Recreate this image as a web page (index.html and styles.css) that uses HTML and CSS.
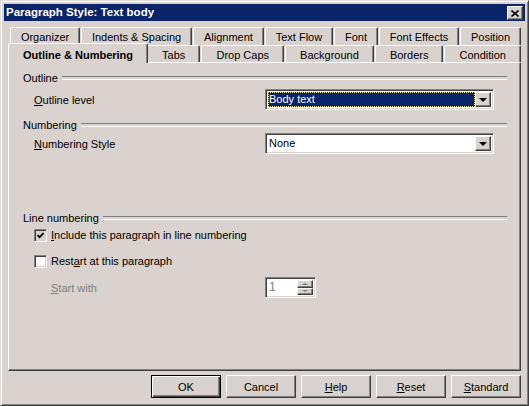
FILE: index.html
```html
<!DOCTYPE html>
<html lang="en">
  <head>
    <meta charset="UTF-8" />
    <title>Paragraph Style: Text body</title>
    <link rel="stylesheet" href="styles.css">
  </head>
  <body>
    <div class="window">
      <div class="titlebar">
        <span class="title">Paragraph Style: Text body</span>
        <button class="close" aria-label="Close">
          <svg width="8" height="7" viewBox="0 0 8 7">
            <path d="M0.5 0.5 L7.5 6.5 M7.5 0.5 L0.5 6.5" stroke="#000" stroke-width="1.6" />
          </svg>
        </button>
      </div>

      <!-- Two rows of tabs, the front row holds the open page -->
      <div class="tabs">
        <div class="tab-row">
          <div class="tab">Organizer</div>
          <div class="tab">Indents &amp; Spacing</div>
          <div class="tab">Alignment</div>
          <div class="tab">Text Flow</div>
          <div class="tab">Font</div>
          <div class="tab">Font Effects</div>
          <div class="tab">Position</div>
        </div>
        <div class="tab-row">
          <div class="tab active">Outline &amp; Numbering</div>
          <div class="tab">Tabs</div>
          <div class="tab">Drop Caps</div>
          <div class="tab">Background</div>
          <div class="tab">Borders</div>
          <div class="tab">Condition</div>
        </div>
      </div>

      <div class="panel">
        <div class="group-head head-outline">Outline</div>
        <div class="field-row row-outline">
          <span class="label"><u>O</u>utline level</span>
          <div class="select focused">
            <span class="value">Body text</span>
            <span class="drop"><i class="arrow"></i></span>
          </div>
        </div>

        <div class="group-head head-numbering">Numbering</div>
        <div class="field-row row-numbering">
          <span class="label"><u>N</u>umbering Style</span>
          <div class="select">
            <span class="value">None</span>
            <span class="drop"><i class="arrow"></i></span>
          </div>
        </div>

        <div class="group-head head-lines">Line numbering</div>
        <div class="check-row row-include">
          <span class="checkbox checked">
            <svg width="7" height="7" viewBox="0 0 7 7">
              <path d="M0.5 3 L2.6 5.2 L6.6 1" fill="none" stroke="#000" stroke-width="1.8" />
            </svg>
          </span>
          <span><u>I</u>nclude this paragraph in line numbering</span>
        </div>
        <div class="check-row row-restart">
          <span class="checkbox"></span>
          <span>Rest<u>a</u>rt at this paragraph</span>
        </div>
        <div class="field-row row-start">
          <span class="label disabled"><u>S</u>tart with</span>
          <div class="spin">
            <span class="spin-value">1</span>
            <span class="spin-buttons">
              <span class="spin-btn"><i class="tiny up"></i></span>
              <span class="spin-btn"><i class="tiny down"></i></span>
            </span>
          </div>
        </div>
      </div>

      <div class="buttons">
        <button class="btn default">OK</button>
        <button class="btn">Cancel</button>
        <button class="btn"><u>H</u>elp</button>
        <button class="btn"><u>R</u>eset</button>
        <button class="btn"><u>S</u>tandard</button>
      </div>
    </div>
  </body>
</html>
```

FILE: styles.css
```css
/* Base */
* {
  margin: 0;
  padding: 0;
  box-sizing: border-box;
}

body {
  font-family: "Liberation Sans", Arial, sans-serif;
  font-size: 11px;
  color: #000;
  background: #d9d2ce;
}

u {
  text-decoration: underline;
  text-underline-offset: 1px;
}

/* Dialog frame */
.window {
  width: 529px;
  height: 406px;
  padding: 3px;
  background: #d9d2ce;
  border: 1px solid;
  border-color: #e2dcd9 #404040 #404040 #e2dcd9;
  box-shadow: inset 1px 1px #fff, inset -1px -1px #808080;
  display: flex;
  flex-direction: column;
}

.titlebar {
  height: 17px;
  background: #0a246a;
  color: #fff;
  display: flex;
  align-items: center;
  justify-content: space-between;
  padding: 0 2px 0 2px;
}

.title {
  font-weight: bold;
  font-size: 11.5px;
  line-height: 17px;
}

.close {
  width: 16px;
  height: 14px;
  background: #d9d2ce;
  border: 1px solid;
  border-color: #fff #404040 #404040 #fff;
  box-shadow: inset -1px -1px #808080;
  display: flex;
  align-items: center;
  justify-content: center;
  margin-top: 1px;
}

/* Tabs */
.tabs {
  margin: 6px 4px 0 6px;
}

.tab-row {
  display: flex;
  gap: 1px;
  height: 18px;
}

.tab-row + .tab-row {
  height: 17px;
}

.tab {
  flex: 1 1 auto;
  text-align: center;
  white-space: nowrap;
  padding-top: 3px;
  line-height: 13px;
  background: #d9d2ce;
  border-top: 1px solid #fff;
  border-left: 1px solid #fff;
  border-right: 1px solid #404040;
  box-shadow: inset -1px 0 #808080;
  border-radius: 2px 2px 0 0;
}

.tab.active {
  position: relative;
  z-index: 1;
  font-weight: bold;
  height: 20px;
  margin: -2px -2px 0 -2px;
  padding-top: 5px;
}

/* Tab page */
.panel {
  height: 309px;
  margin: 0 4px;
  padding: 0 13px 0 14px;
  border: 1px solid;
  border-color: #fff #404040 #404040 #fff;
  box-shadow: inset -1px -1px #808080;
}

.group-head {
  display: flex;
  align-items: center;
  gap: 4px;
  height: 14px;
  line-height: 14px;
}

.group-head::after {
  content: "";
  flex: 1;
  height: 2px;
  border-top: 1px solid #808080;
  border-bottom: 1px solid #fff;
}

.head-outline {
  margin-top: 8px;
}

.head-numbering {
  margin-top: 8px;
}

.head-lines {
  margin-top: 57px;
}

.field-row {
  display: flex;
  align-items: center;
  padding-left: 11px;
}

.field-row .label {
  width: 231px;
}

.row-outline {
  margin-top: 4px;
}

.row-numbering {
  margin-top: 1px;
}

.row-start {
  margin-top: 9px;
}

.row-start .label {
  width: 214px;
  margin-left: 17px;
}

.disabled {
  color: #808080;
}

/* Drop-down lists */
.select {
  width: 229px;
  height: 21px;
  display: flex;
  background: #fff;
  border: 1px solid;
  border-color: #808080 #fff #fff #808080;
  box-shadow: inset 1px 1px #404040, inset -1px -1px #d9d2ce;
  padding: 2px;
}

.select .value {
  flex: 1;
  line-height: 15px;
  padding-left: 1px;
}

.select.focused .value {
  background: #0a246a;
  color: #fff;
  outline: 1px dotted #e8e0a0;
  outline-offset: -1px;
}

.drop {
  width: 16px;
  height: 15px;
  background: #d9d2ce;
  border: 1px solid;
  border-color: #fff #404040 #404040 #fff;
  box-shadow: inset -1px -1px #808080;
  display: flex;
  align-items: center;
  justify-content: center;
}

.arrow {
  width: 0;
  height: 0;
  border-left: 4px solid transparent;
  border-right: 4px solid transparent;
  border-top: 4px solid #000;
  margin-top: 1px;
}

/* Check boxes */
.check-row {
  display: flex;
  align-items: center;
  gap: 4px;
  height: 14px;
  padding-left: 11px;
}

.row-include {
  margin-top: 3px;
}

.row-restart {
  margin-top: 12px;
}

.checkbox {
  width: 13px;
  height: 13px;
  background: #fff;
  border: 1px solid;
  border-color: #808080 #fff #fff #808080;
  box-shadow: inset 1px 1px #404040, inset -1px -1px #d9d2ce;
  display: flex;
  align-items: center;
  justify-content: center;
}

.checkbox.checked {
  background: #d9d2ce;
}

/* Spin field */
.spin {
  width: 51px;
  height: 21px;
  display: flex;
  background: #fff;
  border: 1px solid;
  border-color: #808080 #fff #fff #808080;
  box-shadow: inset 1px 1px #404040, inset -1px -1px #d9d2ce;
  padding: 2px;
}

.spin-value {
  flex: 1;
  color: #808080;
  font-size: 12px;
  line-height: 15px;
  padding-left: 1px;
}

.spin-buttons {
  width: 16px;
  display: flex;
  flex-direction: column;
}

.spin-btn {
  flex: 1;
  background: #d9d2ce;
  border: 1px solid;
  border-color: #fff #404040 #404040 #fff;
  box-shadow: inset -1px -1px #808080;
  display: flex;
  align-items: center;
  justify-content: center;
}

.tiny {
  width: 0;
  height: 0;
  border-left: 3px solid transparent;
  border-right: 3px solid transparent;
}

.tiny.up {
  border-bottom: 2px solid #808080;
}

.tiny.down {
  border-top: 2px solid #808080;
}

/* Dialog buttons */
.buttons {
  display: flex;
  justify-content: flex-end;
  gap: 5px;
  margin-top: 4px;
  padding-right: 4px;
}

.btn {
  width: 70px;
  height: 23px;
  font-family: inherit;
  font-size: 11px;
  color: #000;
  background: #d9d2ce;
  border: 1px solid;
  border-color: #fff #404040 #404040 #fff;
  box-shadow: inset -1px -1px #808080;
}

.btn.default {
  border-color: #000;
  box-shadow: inset 1px 1px #fff, inset -1px -1px #404040, inset -2px -2px #808080;
}
```
